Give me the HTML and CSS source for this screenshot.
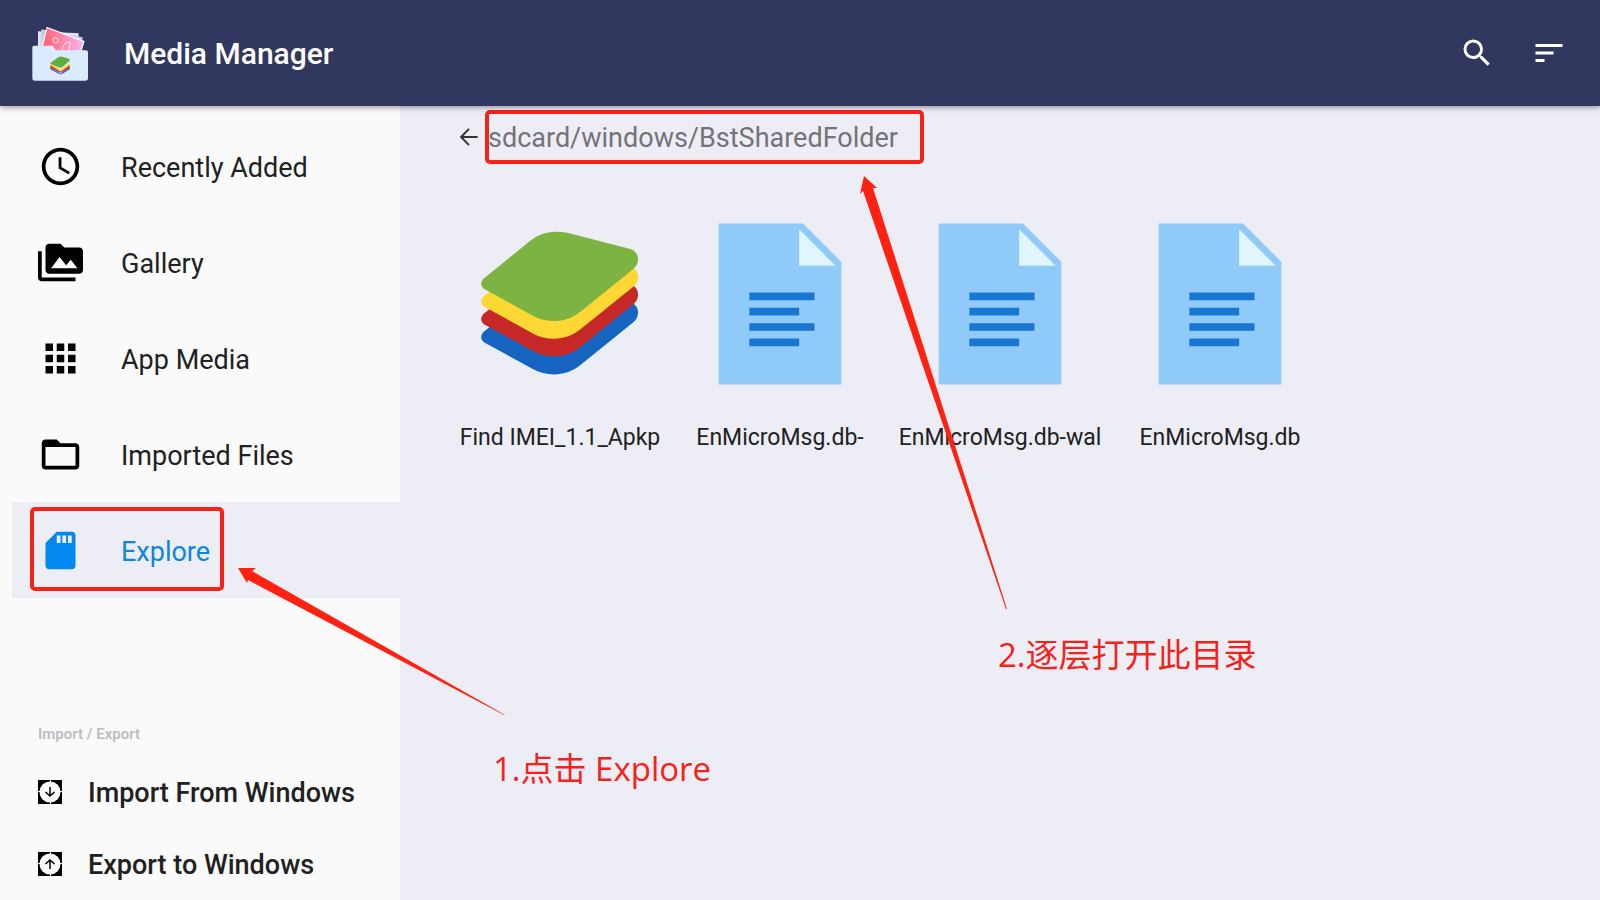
FILE: index.html
```html
<!DOCTYPE html>
<html lang="en">
<head>
<meta charset="utf-8">
<title>Media Manager</title>
<link rel="stylesheet" href="styles.css">
</head>
<body>
<svg class="defs" aria-hidden="true">
  <symbol id="doc" viewBox="0 0 48 48">
    <path fill="#90caf9" d="M40 45H8V3h22l10 10z"/>
    <path fill="#e1f5fe" d="M38.500 14H29V4.500z"/>
    <path fill="#1976d2" d="M16 21h17v2H16zM16 25h13v2H16zM16 29h17v2H16zM16 33h13v2H16z"/>
  </symbol>
  <symbol id="layer" viewBox="84 36 552 552" overflow="visible">
    <path d="M137 231L275 119Q318 86 385 99L568 146C600 153 601 190 580 207L425 332C380 371 322 370 280 348L140 271C118 262 119 243 137 231Z"/>
  </symbol>
</svg>

<header class="topbar">
  <svg class="logo" viewBox="36 31 168 168" aria-hidden="true">
    <defs>
      <linearGradient id="photo" x1="0" x2="1"><stop offset="0" stop-color="#ff5f6b"/><stop offset="1" stop-color="#f6b4ee"/></linearGradient>
    </defs>
    <path fill="#dfe6fb" d="M54 50L176 56 174 100 54 108z"/>
    <path fill="#c3cdf0" d="M64 44L188 68 184 100 60 108z"/>
    <path fill="#fff" d="M80 36L194 79 184 112H60z"/>
    <path fill="url(#photo)" d="M82 41L189 81 181 112H65z"/>
    <circle cx="107" cy="77" r="8" fill="none" stroke="#ffe3ea" stroke-width="3"/>
    <path d="M125 107L132 90Q141 80 151 84L147 105" fill="none" stroke="#ffe3ea" stroke-width="3"/>
    <path fill="#dbebff" d="M42 93H98L108 107H198Q204 107 204 113V190Q204 198 196 198H45Q37 198 37 190V98Q37 93 42 93Z"/>
    <path fill="#2b6fd0" d="M91 158L122 177 149 158V164L128 177Q122 180 116 177L91 164z"/>
    <path fill="#d5202b" d="M91 152L122 171 149 152V159L128 172Q122 175 116 172L91 158z"/>
    <path fill="#ffd600" d="M91 146L122 165 149 146V152L128 166Q122 169 116 166L91 152z"/>
    <path fill="#5fae3c" d="M92 144L116 127Q121 124 127 126L147 132Q152 135 147 140L127 157Q122 160 116 158L93 148Q90 146 92 144Z"/>
  </svg>
  <h1 class="title">Media Manager</h1>
  <button class="tool" aria-label="Search"><svg viewBox="0 0 24 24"><path d="M15.500 14h-.79l-.28-.27A6.471 6.471 0 0 0 16 9.500 6.500 6.500 0 1 0 9.500 16c1.610 0 3.090-.59 4.230-1.570l.27.28v.79l5 4.990L20.490 19l-4.990-5zm-6 0C7.010 14 5 11.990 5 9.500S7.010 5 9.500 5 14 7.010 14 9.500 11.990 14 9.500 14z"/></svg></button>
  <button class="tool" aria-label="Sort"><svg viewBox="0 0 24 24"><path d="M3 18h6v-2H3v2zM3 6v2h18V6H3zm0 7h12v-2H3v2z"/></svg></button>
</header>

<div class="body">
  <aside class="sidebar">
    <nav class="nav">
      <a class="nav-item" href="#recent"><svg class="nav-icon" viewBox="0 0 24 24"><path d="M11.990 2C6.470 2 2 6.480 2 12s4.470 10 9.990 10C17.520 22 22 17.520 22 12S17.520 2 11.990 2zM12 20c-4.420 0-8-3.580-8-8s3.580-8 8-8 8 3.580 8 8-3.580 8-8 8zm.5-13H11v6l5.250 3.150.75-1.230-4.500-2.670z"/></svg><span class="nav-label">Recently Added</span></a>
      <a class="nav-item" href="#gallery"><svg class="nav-icon" viewBox="0 0 24 24"><path d="M2 6H0v5h.01L0 20c0 1.100.9 2 2 2h18v-2H2V6zm20-2h-8l-2-2H6c-1.100 0-1.990.9-1.990 2L4 16c0 1.100.9 2 2 2h16c1.100 0 2-.9 2-2V6c0-1.100-.9-2-2-2zM7 15l4.500-6 3.500 4.510 2.500-3.010L21 15H7z"/></svg><span class="nav-label">Gallery</span></a>
      <a class="nav-item" href="#apps"><svg class="nav-icon" viewBox="0 0 24 24"><path d="M4 8h4V4H4v4zm6 12h4v-4h-4v4zm-6 0h4v-4H4v4zm0-6h4v-4H4v4zm6 0h4v-4h-4v4zm6-10v4h4V4h-4zm-6 4h4V4h-4v4zm6 6h4v-4h-4v4zm0 6h4v-4h-4v4z"/></svg><span class="nav-label">App Media</span></a>
      <a class="nav-item" href="#imported"><svg class="nav-icon" viewBox="0 0 24 24"><path d="M20 6h-8l-2-2H4c-1.100 0-1.990.9-1.990 2L2 18c0 1.100.9 2 2 2h16c1.100 0 2-.9 2-2V8c0-1.100-.9-2-2-2zm0 12H4V8h16v10z"/></svg><span class="nav-label">Imported Files</span></a>
      <a class="nav-item active" href="#explore" aria-current="page"><svg class="nav-icon" viewBox="0 0 24 24"><path d="M18 2h-8L4.020 8 4 20c0 1.100.9 2 2 2h12c1.100 0 2-.9 2-2V4c0-1.100-.9-2-2-2zm-6 6h-2V4h2v4zm3 0h-2V4h2v4zm3 0h-2V4h2v4z"/></svg><span class="nav-label">Explore</span></a>
    </nav>
    <section class="transfer">
      <h2 class="transfer-title">Import / Export</h2>
      <button class="transfer-item"><svg class="transfer-icon" viewBox="0 0 24 24"><path d="M0 0h24v24H0z"/><circle cx="12" cy="12" r="10.500" fill="#fafafa"/><path d="M12.500 0v24M0 11.500h24" stroke="#fafafa" stroke-width="1"/><path d="M12 7v9M7.500 12l4.500 4 4.500-4" fill="none" stroke="#000" stroke-width="1.500"/></svg><span class="transfer-label">Import From Windows</span></button>
      <button class="transfer-item"><svg class="transfer-icon" viewBox="0 0 24 24"><path d="M0 0h24v24H0z"/><circle cx="12" cy="12" r="10.500" fill="#fafafa"/><path d="M12.500 0v24M0 11.500h24" stroke="#fafafa" stroke-width="1"/><path d="M12 17V8M7.500 12l4.500-4 4.500 4" fill="none" stroke="#000" stroke-width="1.500"/></svg><span class="transfer-label">Export to Windows</span></button>
    </section>
  </aside>

  <main class="content">
    <div class="path">
      <button class="back" aria-label="Back"><svg viewBox="0 0 24 24"><path d="M20 12H5M12 4.500L4.700 12l7.300 7.500" fill="none" stroke="#333" stroke-width="1.800"/></svg></button>
      <span class="path-text">sdcard/windows/BstSharedFolder</span>
    </div>
    <div class="files">
      <a class="file" href="#f1">
        <svg class="file-icon" viewBox="84 36 552 552">
          <g fill="#1565c0" transform="translate(0 160)"><use href="#layer" x="84" y="36" width="552" height="552"/></g>
          <g fill="#c62828" transform="translate(0 106)"><use href="#layer" x="84" y="36" width="552" height="552"/></g>
          <g fill="#fdd835" transform="translate(0 53)"><use href="#layer" x="84" y="36" width="552" height="552"/></g>
          <g fill="#7cb342"><use href="#layer" x="84" y="36" width="552" height="552"/></g>
        </svg>
        <span class="file-name">Find IMEI_1.1_Apkp</span>
      </a>
      <a class="file" href="#f2"><svg class="file-icon"><use href="#doc"/></svg><span class="file-name">EnMicroMsg.db-</span></a>
      <a class="file" href="#f3"><svg class="file-icon"><use href="#doc"/></svg><span class="file-name">EnMicroMsg.db-wal</span></a>
      <a class="file" href="#f4"><svg class="file-icon"><use href="#doc"/></svg><span class="file-name">EnMicroMsg.db</span></a>
    </div>
  </main>
</div>

<div class="notes">
  <svg class="arrows" aria-hidden="true">
    <path d="M238 568L256 568 252 571 505 715 504 715 248 580 247 583z"/>
    <path d="M864 176L877 188 873 188 1007 609 1006 609 863 191 860 194z"/>
  </svg>
  <p class="note note-one" lang="zh-CN">1.点击 Explore</p>
  <p class="note note-two" lang="zh-CN">2.逐层打开此目录</p>
</div>
</body>
</html>
```
FILE: styles.css
```css
*,
*::after {
  box-sizing: border-box;
}

body {
  margin: 0;
  min-height: 100vh;
  display: flex;
  flex-direction: column;
  position: relative;
  background: #ededf6;
  color: #212121;
  font-family: Roboto, "Noto Sans", sans-serif;
}

a {
  color: inherit;
  text-decoration: none;
}

button {
  margin: 0;
  padding: 0;
  border: 0;
  background: none;
  color: inherit;
  font: inherit;
  cursor: pointer;
}

svg {
  display: block;
  flex: none;
}

.defs {
  position: absolute;
  width: 0;
  height: 0;
}

.topbar {
  height: 106px;
  padding: 0 33px 0 32px;
  display: flex;
  align-items: center;
  gap: 36px;
  background: #31375e;
  color: #fff;
  box-shadow: 0 1px 6px rgba(0, 0, 0, 0.45);
  z-index: 1;
}

.logo {
  width: 56px;
  height: 56px;
}

.title {
  flex: 1;
  margin: 0;
  font-size: 30px;
  font-weight: 500;
}

.tool svg {
  width: 36px;
  height: 36px;
  fill: #fff;
}

.body {
  flex: 1;
  display: flex;
}

.sidebar {
  width: 400px;
  flex: none;
  display: flex;
  flex-direction: column;
  justify-content: space-between;
  background: #fafafa;
}

.nav {
  padding: 12px 0 0 12px;
}

.nav-item {
  position: relative;
  height: 96px;
  padding-left: 26px;
  display: flex;
  align-items: center;
  gap: 38px;
  font-size: 27px;
}

.nav-label {
  padding-top: 4px;
}

.nav-icon {
  width: 45px;
  height: 45px;
  fill: #000;
}

.active {
  background: #ededf6;
  color: #0b87e0;
}

.active .nav-icon {
  fill: #0288f0;
}

.active::after {
  content: "";
  position: absolute;
  left: 18px;
  top: 5px;
  width: 194px;
  height: 84px;
  border: 4px solid #f5221a;
  border-radius: 5px;
}

.transfer-title {
  margin: 0;
  padding: 0 38px 12px;
  color: #bdbdc1;
  font-size: 15px;
  font-weight: 600;
  line-height: 20px;
}

.transfer-item {
  width: 100%;
  height: 72px;
  padding-left: 38px;
  display: flex;
  align-items: center;
  gap: 26px;
  font-size: 27px;
  font-weight: 500;
}

.transfer-label {
  padding-top: 2px;
}

.transfer-icon {
  width: 24px;
  height: 24px;
}

.content {
  flex: 1;
  min-width: 0;
  padding: 4px 50px 0;
}

.path {
  position: relative;
  height: 54px;
  padding-left: 6px;
  display: flex;
  align-items: center;
  gap: 6px;
  color: #737378;
  font-size: 27px;
}

.path-text {
  padding-top: 2px;
}

.path::after {
  content: "";
  position: absolute;
  left: 35px;
  top: 0;
  width: 439px;
  height: 54px;
  border: 4px solid #f5221a;
  border-radius: 5px;
}

.back svg {
  width: 26px;
  height: 26px;
}

.files {
  padding-top: 48px;
  display: grid;
  grid-template-columns: repeat(auto-fill, 220px);
}

.file {
  display: flex;
  flex-direction: column;
  align-items: center;
  gap: 27px;
  font-size: 23px;
  line-height: 30px;
  white-space: nowrap;
}

.file-icon {
  width: 184px;
  height: 184px;
}

.notes {
  position: absolute;
  inset: 0;
  z-index: 2;
  overflow: hidden;
  pointer-events: none;
}

.arrows {
  width: 100%;
  height: 100%;
  fill: #ff2212;
}

.note {
  position: absolute;
  margin: 0;
  color: #f5221a;
  font-family: "Open Sans", "Noto Sans CJK SC", sans-serif;
  font-size: 33px;
  line-height: 48px;
  white-space: nowrap;
}

.note-one {
  left: 493px;
  top: 745px;
}

.note-two {
  left: 998px;
  top: 631px;
}
```
